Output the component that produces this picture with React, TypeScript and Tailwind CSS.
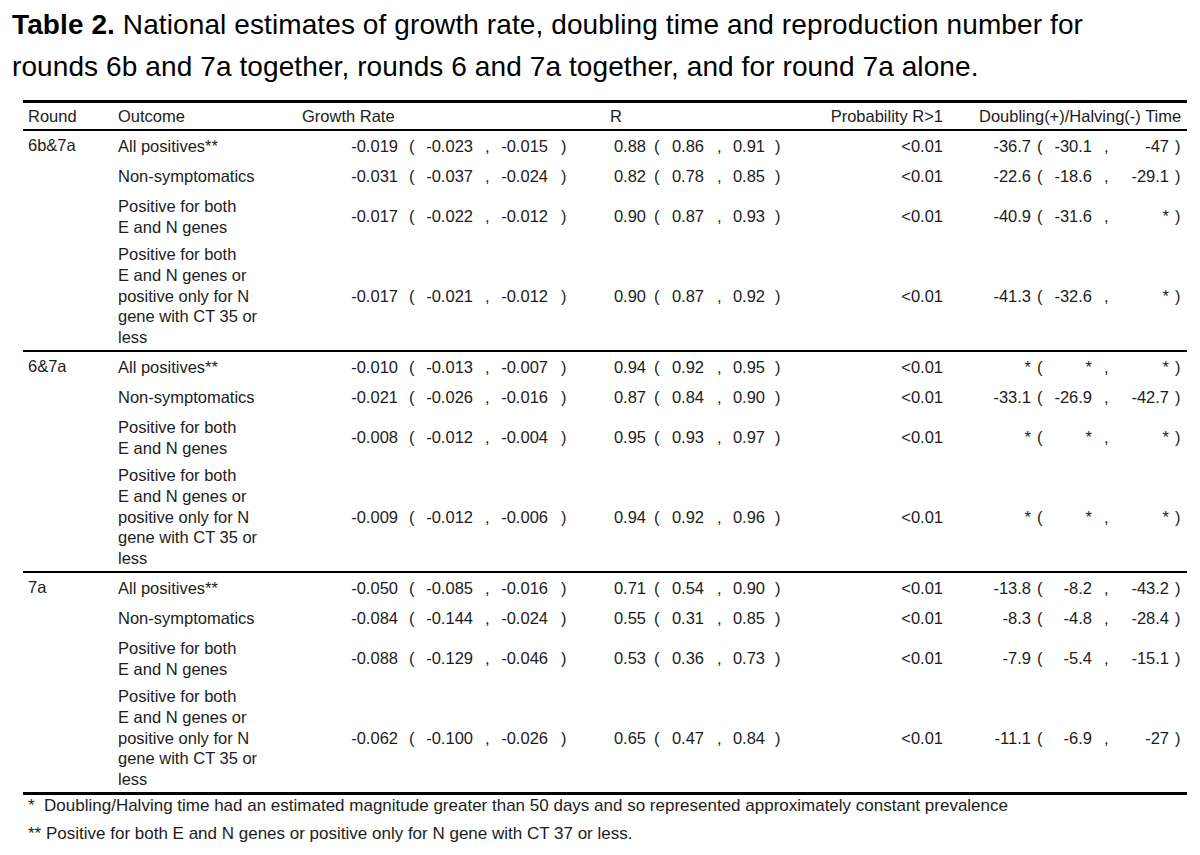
import React from "react";

type Row = {
  outcome: string[];
  g: [string, string, string];
  r: [string, string, string];
  p: string;
  d: [string, string, string];
  h: string;
};

type Group = { round: string; rows: Row[] };

const outcomes = {
  all: ["All positives**"],
  non: ["Non-symptomatics"],
  both: ["Positive for both", "E and N genes"],
  long: ["Positive for both", "E and N genes or", "positive only for N", "gene with CT 35 or", "less"],
};

const groups: Group[] = [
  {
    round: "6b&7a",
    rows: [
      { outcome: outcomes.all, g: ["-0.019", "-0.023", "-0.015"], r: ["0.88", "0.86", "0.91"], p: "<0.01", d: ["-36.7", "-30.1", "-47"], h: "h-[30px]" },
      { outcome: outcomes.non, g: ["-0.031", "-0.037", "-0.024"], r: ["0.82", "0.78", "0.85"], p: "<0.01", d: ["-22.6", "-18.6", "-29.1"], h: "h-[30px]" },
      { outcome: outcomes.both, g: ["-0.017", "-0.022", "-0.012"], r: ["0.90", "0.87", "0.93"], p: "<0.01", d: ["-40.9", "-31.6", "*"], h: "h-[51px]" },
      { outcome: outcomes.long, g: ["-0.017", "-0.021", "-0.012"], r: ["0.90", "0.87", "0.92"], p: "<0.01", d: ["-41.3", "-32.6", "*"], h: "h-[108px]" },
    ],
  },
  {
    round: "6&7a",
    rows: [
      { outcome: outcomes.all, g: ["-0.010", "-0.013", "-0.007"], r: ["0.94", "0.92", "0.95"], p: "<0.01", d: ["*", "*", "*"], h: "h-[30px]" },
      { outcome: outcomes.non, g: ["-0.021", "-0.026", "-0.016"], r: ["0.87", "0.84", "0.90"], p: "<0.01", d: ["-33.1", "-26.9", "-42.7"], h: "h-[30px]" },
      { outcome: outcomes.both, g: ["-0.008", "-0.012", "-0.004"], r: ["0.95", "0.93", "0.97"], p: "<0.01", d: ["*", "*", "*"], h: "h-[51px]" },
      { outcome: outcomes.long, g: ["-0.009", "-0.012", "-0.006"], r: ["0.94", "0.92", "0.96"], p: "<0.01", d: ["*", "*", "*"], h: "h-[108px]" },
    ],
  },
  {
    round: "7a",
    rows: [
      { outcome: outcomes.all, g: ["-0.050", "-0.085", "-0.016"], r: ["0.71", "0.54", "0.90"], p: "<0.01", d: ["-13.8", "-8.2", "-43.2"], h: "h-[30px]" },
      { outcome: outcomes.non, g: ["-0.084", "-0.144", "-0.024"], r: ["0.55", "0.31", "0.85"], p: "<0.01", d: ["-8.3", "-4.8", "-28.4"], h: "h-[30px]" },
      { outcome: outcomes.both, g: ["-0.088", "-0.129", "-0.046"], r: ["0.53", "0.36", "0.73"], p: "<0.01", d: ["-7.9", "-5.4", "-15.1"], h: "h-[51px]" },
      { outcome: outcomes.long, g: ["-0.062", "-0.100", "-0.026"], r: ["0.65", "0.47", "0.84"], p: "<0.01", d: ["-11.1", "-6.9", "-27"], h: "h-[108px]" },
    ],
  },
];

function DataRow({ row, round }: { row: Row; round?: string }) {
  return (
    <div className={`flex ${row.h}`}>
      {/* round label sits at the top of the group */}
      <div className="w-[95px] pl-[5px] pt-[4px] leading-[21px]">{round}</div>

      <div className="flex w-[184px] items-center leading-[20.8px]">
        <div>
          {row.outcome.map((line, i) => (
            <div key={i}>{line}</div>
          ))}
        </div>
      </div>

      {/* growth rate */}
      <div className="flex w-[308px] items-center">
        <span className="w-[96px] text-right">{row.g[0]}</span>
        <span className="w-[22px] pl-[11px]">(</span>
        <span className="w-[53px] text-right">{row.g[1]}</span>
        <span className="w-[24px] pl-[12px]">,</span>
        <span className="w-[51px] text-right">{row.g[2]}</span>
        <span className="w-[62px] pl-[13px]">)</span>
      </div>

      {/* R */}
      <div className="flex w-[190px] items-center">
        <span className="w-[36px] text-right">{row.r[0]}</span>
        <span className="w-[19px] pl-[8px]">(</span>
        <span className="w-[39px] text-right">{row.r[1]}</span>
        <span className="w-[21px] pl-[13px]">,</span>
        <span className="w-[40px] text-right">{row.r[2]}</span>
        <span className="w-[35px] pl-[10px]">)</span>
      </div>

      <div className="flex w-[143px] items-center justify-end">{row.p}</div>

      {/* doubling / halving time */}
      <div className="flex w-[244px] items-center">
        <span className="w-[88px] text-right">{row.d[0]}</span>
        <span className="w-[14px] pl-[6px]">(</span>
        <span className="w-[47px] text-right">{row.d[1]}</span>
        <span className="w-[20px] pl-[12px]">,</span>
        <span className="w-[57px] text-right">{row.d[2]}</span>
        <span className="w-[18px] pl-[6px]">)</span>
      </div>
    </div>
  );
}

export default function App() {
  return (
    <div className="h-[855px] w-[1200px] overflow-hidden bg-white font-['Liberation_Sans',Arial,sans-serif] text-black">
      <h1 className="pl-[12px] pt-[4px] text-[28px] leading-[42px] font-normal tracking-[0.1px]">
        <span className="font-bold">Table 2.</span> National estimates of growth rate, doubling time and reproduction number for
        <br />
        rounds 6b and 7a together, rounds 6 and 7a together, and for round 7a alone.
      </h1>

      <div className="ml-[23px] mt-[12px] w-[1164px] text-[16.5px] text-[#1c1c1c]">
        <div className="flex h-[31px] items-center border-t-[3px] border-b-2 border-black">
          <div className="w-[95px] pl-[5px]">Round</div>
          <div className="w-[184px]">Outcome</div>
          <div className="w-[308px]">Growth Rate</div>
          <div className="w-[190px]">R</div>
          <div className="w-[143px] text-right">Probability R&gt;1</div>
          <div className="w-[244px] pl-[36px]">Doubling(+)/Halving(-) Time</div>
        </div>

        {groups.map((group, gi) => (
          <div key={group.round} className={gi > 0 ? "border-t-2 border-black" : ""}>
            {group.rows.map((row, ri) => (
              <DataRow key={ri} row={row} round={ri === 0 ? group.round : undefined} />
            ))}
          </div>
        ))}

        <div className="border-t-[3px] border-black" />
      </div>

      <div className="flex flex-col gap-[6px] pl-[28px] text-[17px] leading-[22px] text-[#1c1c1c]">
        <p>*&nbsp; Doubling/Halving time had an estimated magnitude greater than 50 days and so represented approximately constant prevalence</p>
        <p>** Positive for both E and N genes or positive only for N gene with CT 37 or less.</p>
      </div>
    </div>
  );
}
